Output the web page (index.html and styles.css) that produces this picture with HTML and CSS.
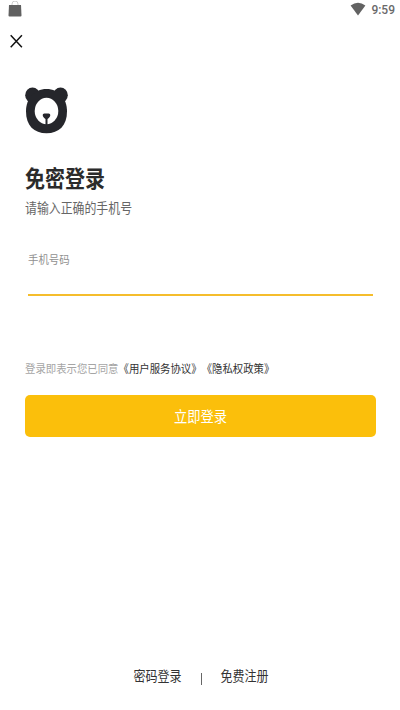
FILE: index.html
```html
<!DOCTYPE html>
<html lang="zh-CN">
<head>
<meta charset="utf-8">
<title>免密登录</title>
<link rel="stylesheet" href="styles.css">
</head>
<body>
<header class="status">
  <svg class="bag" width="14" height="16" viewBox="0 0 14 16"><path d="M4 4V3a3 3 0 0 1 6 0v1" fill="none" stroke="#ccc" stroke-width="1"/><path d="M1 4h12l.5 10.500q0 1-1 1H1.500q-1 0-1-1z" fill="#606060"/></svg>
  <div class="status-right">
    <svg width="16" height="14" viewBox="0 0 16 14"><path d="M.6 3.600Q8-2 15.400 3.600L8 13.500z" fill="#626262"/></svg>
    <span class="clock">9:59</span>
  </div>
</header>
<button class="close" aria-label="关闭"><svg width="14" height="14" viewBox="0 0 14 14"><path d="M1.700 1.200l11.200 12M12.900 1.200L1.700 13.200" fill="none" stroke="#111" stroke-width="1.500"/></svg></button>
<main class="login">
  <svg class="logo" width="44" height="47" viewBox="0 0 44 47">
    <g fill="#25262b"><ellipse cx="7.500" cy="8.200" rx="7.300" ry="7.600"/><ellipse cx="35.500" cy="8.200" rx="7.300" ry="7.600"/><path d="M21.500 2C34 2 42 11.500 42 24.500C42 38.500 34 46.300 21.500 46.300S1 38.500 1 24.500C1 11.500 9 2 21.500 2z"/></g>
    <ellipse cx="21.500" cy="24" rx="11.800" ry="13.200" fill="#fff"/>
    <path d="M19.300 26.500h4.400q1.600 0 1.600 1.500c0 1.700-1.400 3-2.800 3.900v6h-2v-6c-1.400-.9-2.800-2.200-2.800-3.900q0-1.500 1.600-1.500z" fill="#25262b"/>
  </svg>
  <h1 class="title">免密登录</h1>
  <p class="subtitle">请输入正确的手机号</p>
  <div class="field"><span class="tall">手机号码</span></div>
  <p class="terms">登录即表示您已同意<span class="link">《用户服务协议》《隐私权政策》</span></p>
  <button class="submit"><span class="tall">立即登录</span></button>
</main>
<footer class="footer"><span class="tall">密码登录</span><i class="divider"></i><span class="tall">免费注册</span></footer>
</body>
</html>
```
FILE: styles.css
```css
* { box-sizing: border-box; }
body {
  margin: 0;
  width: 400px;
  height: 710px;
  display: flex;
  flex-direction: column;
  overflow: hidden;
  background: #fff;
  color: #333;
  font-family: Roboto, "Noto Sans CJK SC", sans-serif;
}
button { border: 0; padding: 0; background: none; font-family: inherit; }
svg { display: block; flex: none; }
.status {
  height: 20px;
  padding: 1px 5px 0 8px;
  display: flex;
  justify-content: space-between;
}
.status-right { display: flex; gap: 5px; padding-top: 1px; }
.clock {
  font-size: 12px;
  line-height: 16px;
  font-weight: 500;
  color: #6a6a6a;
  transform: scaleY(1.12);
}
.close { width: 14px; height: 14px; margin: 14px 0 0 9px; }
.login {
  flex: 1;
  display: flex;
  flex-direction: column;
  padding: 39px 24px 0 25px;
}
.title, .subtitle, .terms, .tall { transform: scaleY(1.12); }
.title {
  margin: 30px 0 0;
  font-size: 20px;
  line-height: 30px;
  font-weight: 700;
  color: #2b2b2b;
}
.subtitle {
  margin: 5px 0 0;
  font-size: 11.9px;
  line-height: 20px;
  color: #666;
}
.field {
  display: flex;
  align-items: flex-start;
  height: 45px;
  margin: 32px 3px 0;
  border-bottom: 2px solid #f5bd2c;
  font-size: 10.4px;
  line-height: 20px;
  color: #909090;
}
.terms {
  margin: 64px 0 0;
  font-size: 10.4px;
  line-height: 20px;
  color: #a5a5a5;
  white-space: nowrap;
  text-spacing-trim: space-all;
}
.link { color: #333; }
.submit {
  height: 42px;
  margin-top: 15px;
  padding-bottom: 2px;
  border-radius: 5px;
  background: #fbbf0b;
  color: #fff;
  font-size: 13.3px;
}
.submit .tall { display: inline-block; }
.footer {
  display: flex;
  align-items: center;
  justify-content: center;
  height: 20px;
  margin: 0 0 23px 2px;
  font-size: 12px;
  line-height: 20px;
}
.divider { width: 1px; height: 12px; margin: 3px 19px 0; background: #666; }
```
